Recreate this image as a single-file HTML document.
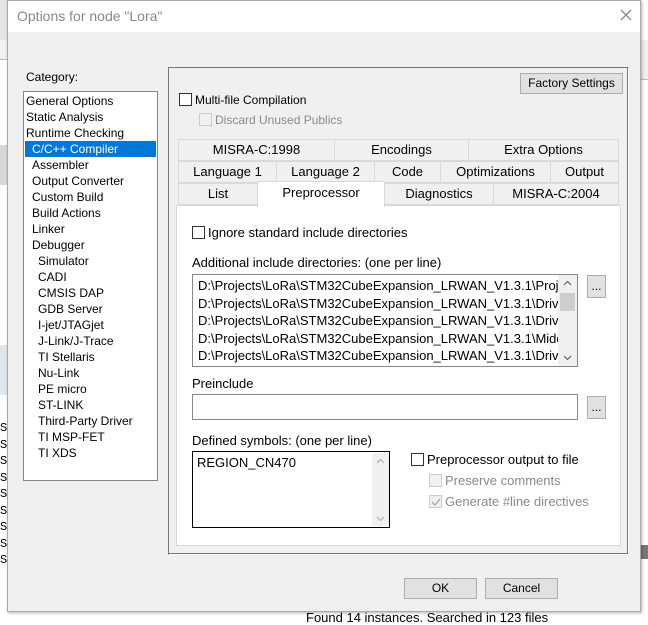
<!DOCTYPE html>
<html><head><meta charset="utf-8"><style>
*{box-sizing:border-box;margin:0;padding:0}
body{width:648px;height:619px;overflow:hidden;background:#fff;font-family:"Liberation Sans","Noto Sans CJK SC",sans-serif;font-size:12px;color:#000;position:relative}
.a{position:absolute;white-space:nowrap}
.dlg{left:7px;top:0;width:634px;height:612px;background:#f0f0f0;border:1px solid #aaa;box-shadow:1px 1px 3px rgba(0,0,0,.3)}
.title{left:0;top:0;width:632px;height:31px;background:#fff}
.list{background:#fff;border:1px solid #828790}
.tab{position:absolute;height:22px;border:1px solid #d9d9d9;background:#f0f0f0;text-align:center;line-height:20px;font-size:13px}
.cb{position:absolute;width:13px;height:13px;border:1px solid #333;background:#fff}
.cbd{border-color:#ccc;background:#f0f0f0}
.btn{position:absolute;background:#e1e1e1;border:1px solid #adadad;text-align:center;font-size:12px}
.dim{color:#8a8a8a}
</style></head><body>
<div class="a" style="left:0;top:0;width:7px;height:40px;background:#e6e6e6"></div>
<div class="a" style="left:0;top:40px;width:7px;height:20px;background:#f0f0f0;border-bottom:1px solid #bbb"></div>
<div class="a" style="left:0;top:145px;width:7px;height:40px;background:#d8d8d8"></div>
<div class="a" style="left:0;top:345px;width:7px;height:50px;background:#dfe6ee"></div>
<div class="a" style="left:0;top:420px;font-size:12px;line-height:16.5px;font-family:'Liberation Mono',monospace">S<br>S<br>S<br>S<br>S<br>S<br>S<br>S<br>S</div>
<div class="a" style="left:0;top:590px;width:648px;height:29px;background:#fff"></div>
<div class="a" style="left:306px;top:610px;font-size:13px">Found 14 instances. Searched in 123 files</div>
<div class="a" style="left:641px;top:40px;width:7px;height:40px;background:#f0f0f0;border-bottom:1px solid #bbb"></div>
<div class="a" style="left:641px;top:545px;width:7px;height:14px;background:#777"></div>
<div class="a dlg">
 <div class="a title"></div>
 <div class="a" style="left:9px;top:7px;font-size:14px;color:#888">Options for node "Lora"</div>
 <svg class="a" style="left:612px;top:8px" width="12" height="12"><path d="M1 1L11 11M11 1L1 11" stroke="#777" stroke-width="1.2"/></svg>
</div>
<div class="a" style="left:26px;top:70px">Category:</div>
<div class="a list" style="left:23px;top:91px;width:135px;height:390px"></div>
<div class="a" style="left:25px;top:141px;width:131px;height:16px;background:#0078d7"></div>
<div class="a" style="left:26px;top:93px;line-height:16px">General Options<br>Static Analysis<br>Runtime Checking</div>
<div class="a" style="left:32px;top:141px;line-height:16px;color:#fff">C/C++ Compiler</div>
<div class="a" style="left:32px;top:157px;line-height:16px">Assembler<br>Output Converter<br>Custom Build<br>Build Actions<br>Linker<br>Debugger</div>
<div class="a" style="left:38px;top:253px;line-height:16px">Simulator<br>CADI<br>CMSIS DAP<br>GDB Server<br>I-jet/JTAGjet<br>J-Link/J-Trace<br>TI Stellaris<br>Nu-Link<br>PE micro<br>ST-LINK<br>Third-Party Driver<br>TI MSP-FET<br>TI XDS</div>

<div class="a" style="left:168px;top:67px;width:461px;height:488px;border:1px solid #777;border-right-color:#fff;border-bottom-color:#fff;box-shadow:inset -1px -1px 0 #777"></div>
<div class="btn" style="left:520px;top:73px;width:103px;height:21px;line-height:19px">Factory Settings</div>
<div class="cb" style="left:179px;top:93px"></div><div class="a" style="left:195px;top:93px">Multi-file Compilation</div>
<div class="cb cbd" style="left:199px;top:113px"></div><div class="a dim" style="left:215px;top:113px">Discard Unused Publics</div>

<div class="a" style="left:176px;top:205px;width:445px;height:341px;background:#fff;border:1px solid #d9d9d9"></div>
<div class="tab" style="left:178px;top:139px;width:157px">MISRA-C:1998</div>
<div class="tab" style="left:334px;top:139px;width:135px">Encodings</div>
<div class="tab" style="left:468px;top:139px;width:151px">Extra Options</div>
<div class="tab" style="left:178px;top:161px;width:99px">Language 1</div>
<div class="tab" style="left:276px;top:161px;width:99px">Language 2</div>
<div class="tab" style="left:374px;top:161px;width:67px">Code</div>
<div class="tab" style="left:440px;top:161px;width:111px">Optimizations</div>
<div class="tab" style="left:550px;top:161px;width:69px">Output</div>
<div class="tab" style="left:178px;top:183px;width:80px">List</div>
<div class="tab" style="left:384px;top:183px;width:110px">Diagnostics</div>
<div class="tab" style="left:493px;top:183px;width:126px">MISRA-C:2004</div>
<div class="tab" style="left:257px;top:181px;width:128px;height:26px;background:#fff;border-bottom:none;line-height:22px">Preprocessor</div>

<div class="cb" style="left:192px;top:226px"></div><div class="a" style="left:208px;top:225px;font-size:13px">Ignore standard include directories</div>
<div class="a" style="left:192px;top:255px;font-size:13px">Additional include directories: (one per line)</div>
<div class="a" style="left:192px;top:274px;width:386px;height:93px;border:1px solid #828790;background:#fff;overflow:hidden">
 <div class="a" style="left:5px;top:2px;line-height:17.5px;font-size:13px;width:360px;overflow:hidden">D:\Projects\LoRa\STM32CubeExpansion_LRWAN_V1.3.1\Projects<br>D:\Projects\LoRa\STM32CubeExpansion_LRWAN_V1.3.1\Drivers<br>D:\Projects\LoRa\STM32CubeExpansion_LRWAN_V1.3.1\Drivers<br>D:\Projects\LoRa\STM32CubeExpansion_LRWAN_V1.3.1\Middle<br>D:\Projects\LoRa\STM32CubeExpansion_LRWAN_V1.3.1\Drivers</div>
 <div class="a" style="left:365px;top:0;width:19px;height:91px;background:#f0f0f0"></div>
 <div class="a" style="left:367px;top:18px;width:15px;height:18px;background:#cdcdcd"></div>
 <svg class="a" style="left:370px;top:5px" width="9" height="6"><path d="M1 5L4.5 1.5L8 5" stroke="#555" fill="none"/></svg>
 <svg class="a" style="left:370px;top:80px" width="9" height="6"><path d="M1 1L4.5 4.5L8 1" stroke="#555" fill="none"/></svg>
</div>
<div class="btn" style="left:587px;top:275px;width:19px;height:23px;line-height:20px">...</div>
<div class="a" style="left:192px;top:376px;font-size:13px">Preinclude</div>
<div class="a" style="left:192px;top:394px;width:386px;height:26px;border:1px solid #828790;background:#fff"></div>
<div class="btn" style="left:587px;top:396px;width:19px;height:23px;line-height:20px">...</div>
<div class="a" style="left:192px;top:433px;font-size:13px">Defined symbols: (one per line)</div>
<div class="a" style="left:192px;top:451px;width:198px;height:77px;border:1px solid #000;background:#fff">
 <div class="a" style="left:4px;top:3px;font-size:13px">REGION_CN470</div>
 <div class="a" style="left:179px;top:1px;width:17px;height:73px;background:#f0f0f0"></div>
 <svg class="a" style="left:183px;top:6px" width="9" height="6"><path d="M1 5L4.5 1.5L8 5" stroke="#aaa" fill="none"/></svg>
 <svg class="a" style="left:183px;top:64px" width="9" height="6"><path d="M1 1L4.5 4.5L8 1" stroke="#aaa" fill="none"/></svg>
</div>
<div class="cb" style="left:411px;top:453px"></div><div class="a" style="left:427px;top:452px;font-size:13px">Preprocessor output to file</div>
<div class="cb cbd" style="left:429px;top:474px"></div><div class="a dim" style="left:445px;top:473px;font-size:13px">Preserve comments</div>
<div class="cb cbd" style="left:429px;top:495px"></div><svg class="a" style="left:431px;top:497px" width="10" height="10"><path d="M1 5L4 8L9 2" stroke="#999" fill="none"/></svg><div class="a dim" style="left:445px;top:494px;font-size:13px">Generate #line directives</div>

<div class="btn" style="left:404px;top:578px;width:73px;height:21px;line-height:19px">OK</div>
<div class="btn" style="left:485px;top:578px;width:73px;height:21px;line-height:19px">Cancel</div>
</body></html>
